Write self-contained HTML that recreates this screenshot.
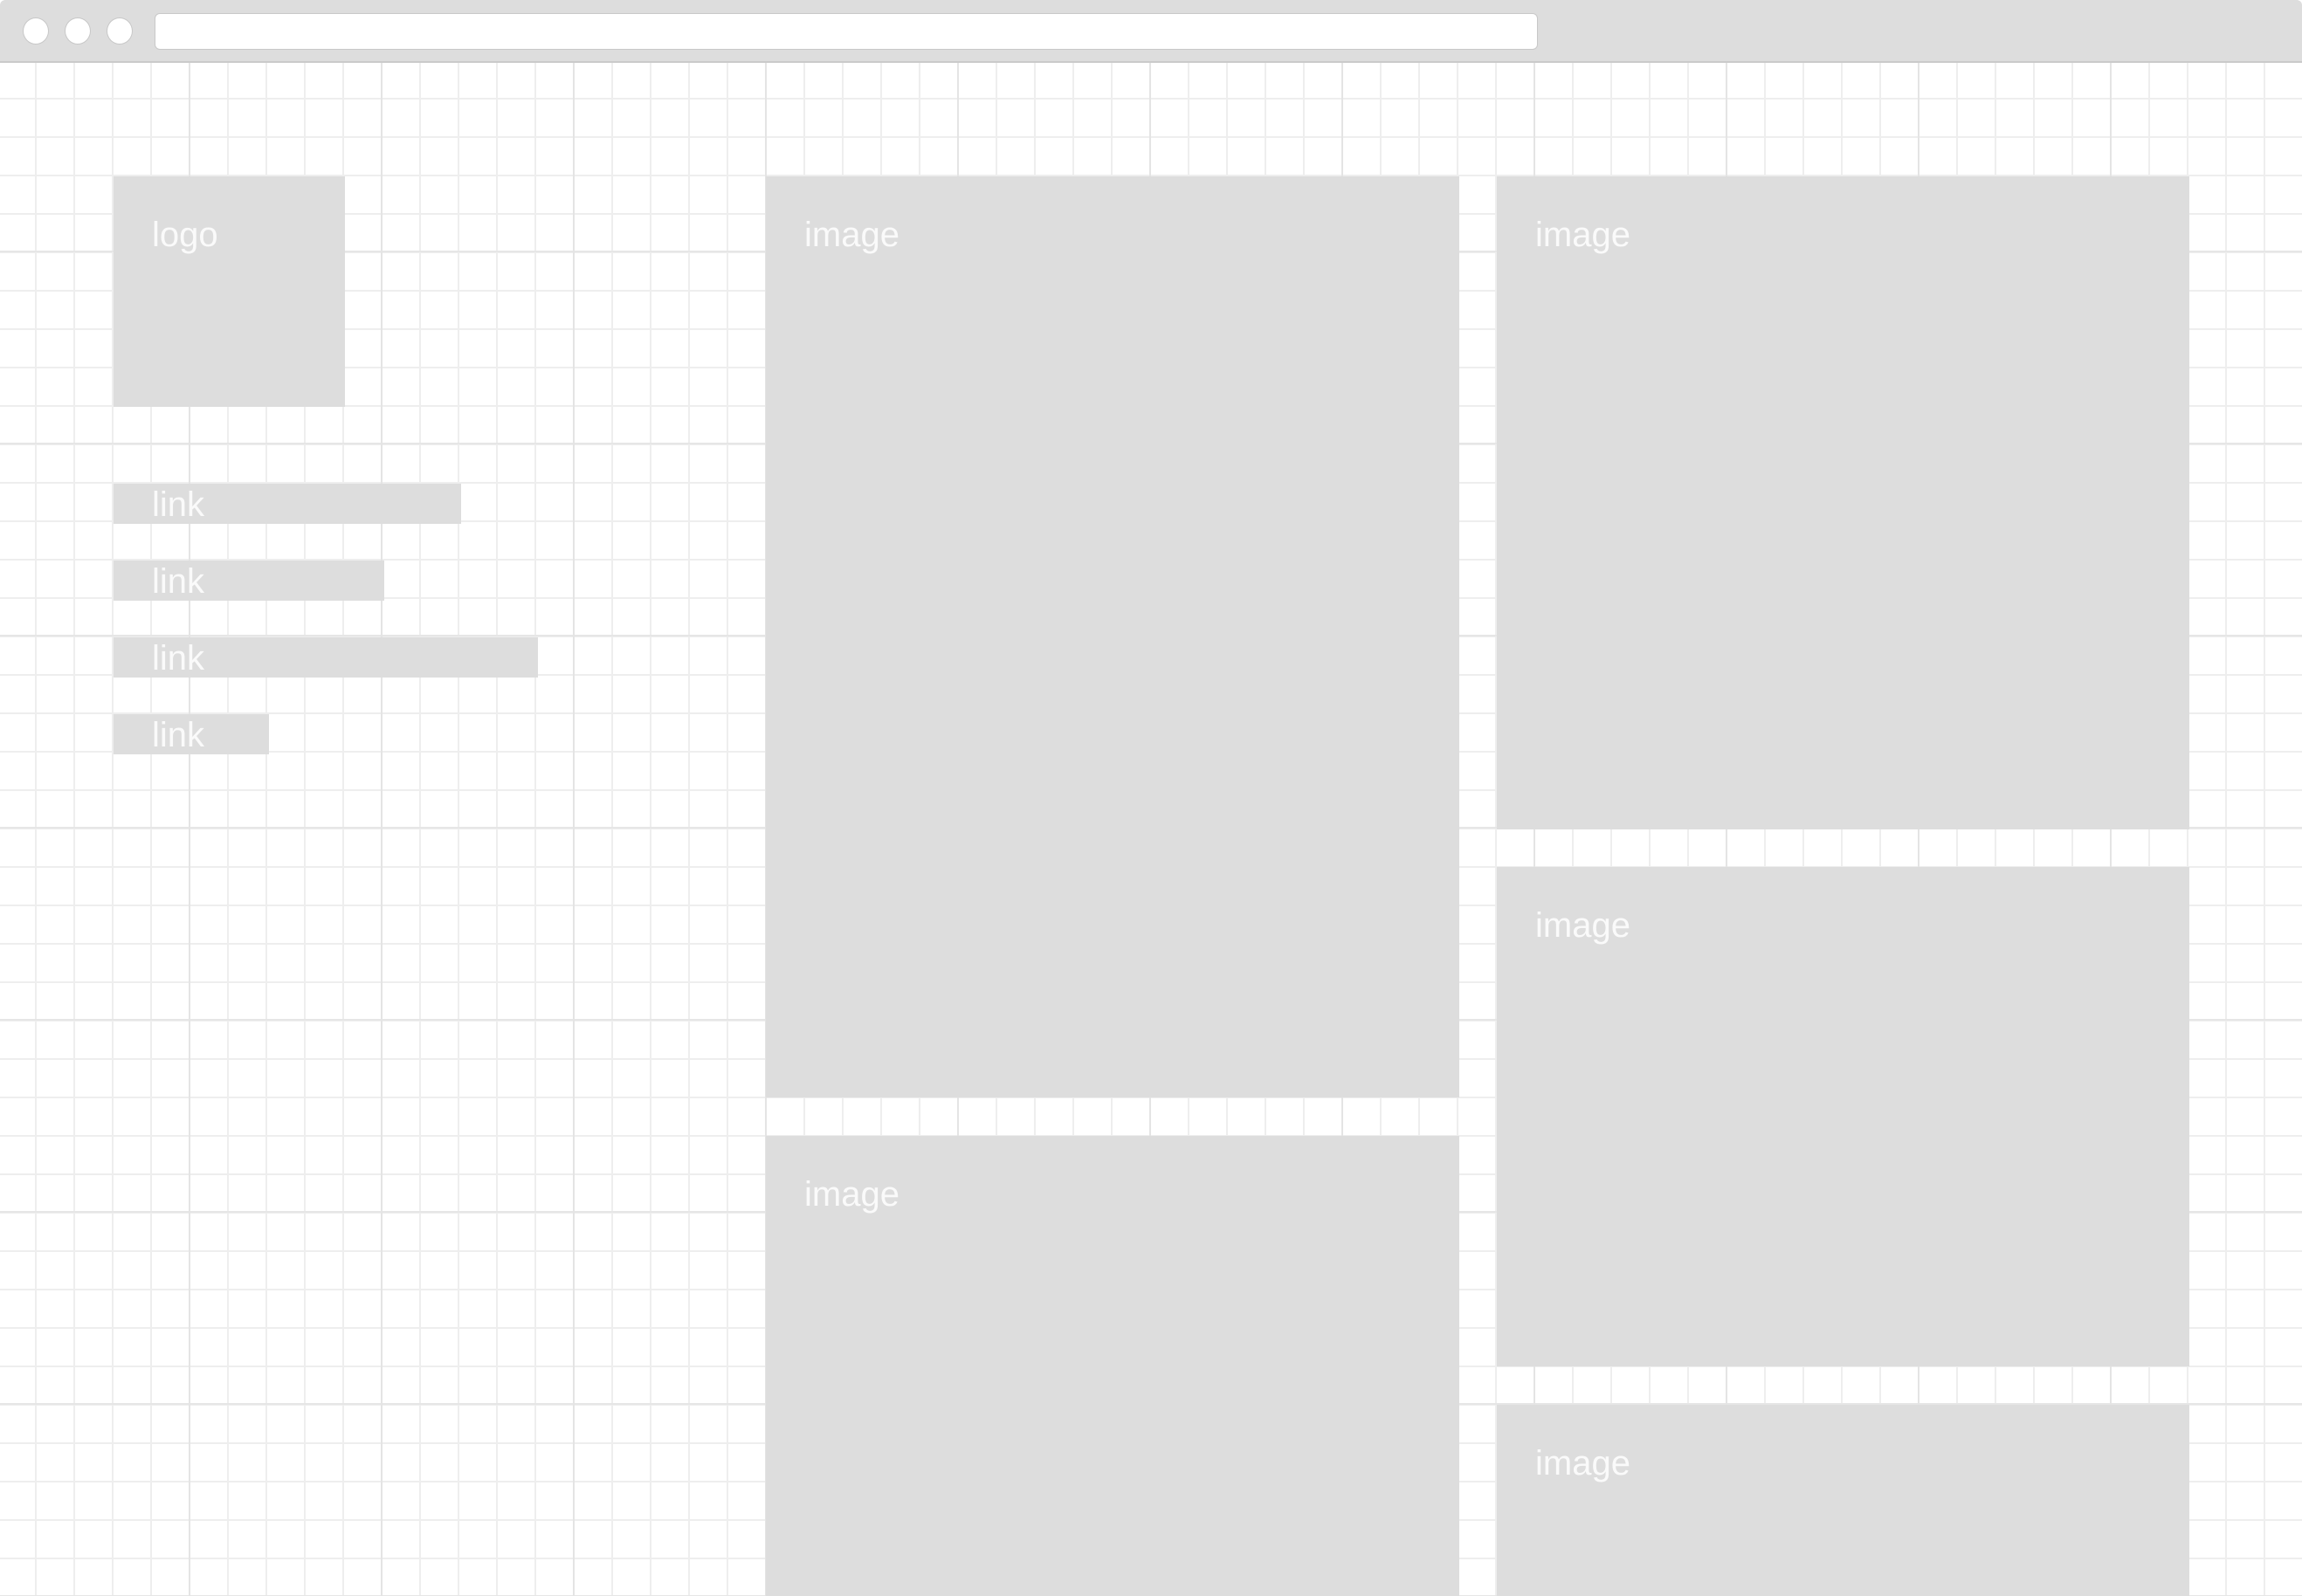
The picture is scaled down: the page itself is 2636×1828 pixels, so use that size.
<!DOCTYPE html>
<html><head><meta charset="utf-8"><style>
html,body{margin:0;padding:0}
body{width:2636px;height:1828px;position:relative;overflow:hidden;background:#fff;font-family:"Liberation Sans",sans-serif}
.grid{position:absolute;left:0;top:72px;width:2636px;height:1756px;
background-image:
linear-gradient(to right,#e4e4e4 2px,transparent 2px),
linear-gradient(to bottom,#e6e6e6 2px,transparent 2px),
linear-gradient(to right,#eeeeee 2px,transparent 2px),
linear-gradient(to bottom,#eeeeee 2px,transparent 2px);
background-size:220px 100%,100% 220px,44px 100%,100% 44px;
background-position:216px 0,0 -5px,40px 0,0 40px;}
.bar{position:absolute;left:0;top:0;width:2636px;height:70px;background:#dddddd;border-bottom:2px solid #cacaca;border-radius:6px 6px 0 0}
.dot{position:absolute;top:20px;width:28px;height:29px;border-radius:50%;background:#fff;border:1px solid #c8c8c8}
.url{position:absolute;left:177px;top:15px;width:1584px;height:42px;background:#fff;border:1px solid #c8c8c8;border-radius:6px;box-sizing:border-box}
.box{position:absolute;background:#dddddd;color:#fafafa;font-size:40px;line-height:1}
.box span{position:absolute;left:44px;top:47px}
.lk span{top:4px}
</style></head><body>
<div class="grid"></div>
<div class="bar">
<div class="dot" style="left:26px"></div>
<div class="dot" style="left:74px"></div>
<div class="dot" style="left:122px"></div>
<div class="url"></div>
</div>
<div class="box" style="left:130px;top:202px;width:265px;height:264px"><span>logo</span></div>
<div class="box lk" style="left:130px;top:554px;width:398px;height:46px"><span>link</span></div>
<div class="box lk" style="left:130px;top:642px;width:310px;height:46px"><span>link</span></div>
<div class="box lk" style="left:130px;top:730px;width:486px;height:46px"><span>link</span></div>
<div class="box lk" style="left:130px;top:818px;width:178px;height:46px"><span>link</span></div>
<div class="box" style="left:877px;top:202px;width:794px;height:1055px"><span>image</span></div>
<div class="box" style="left:877px;top:1301px;width:794px;height:527px"><span>image</span></div>
<div class="box" style="left:1714px;top:202px;width:793px;height:748px"><span>image</span></div>
<div class="box" style="left:1714px;top:993px;width:793px;height:572px"><span>image</span></div>
<div class="box" style="left:1714px;top:1609px;width:793px;height:219px"><span>image</span></div>
</body></html>
